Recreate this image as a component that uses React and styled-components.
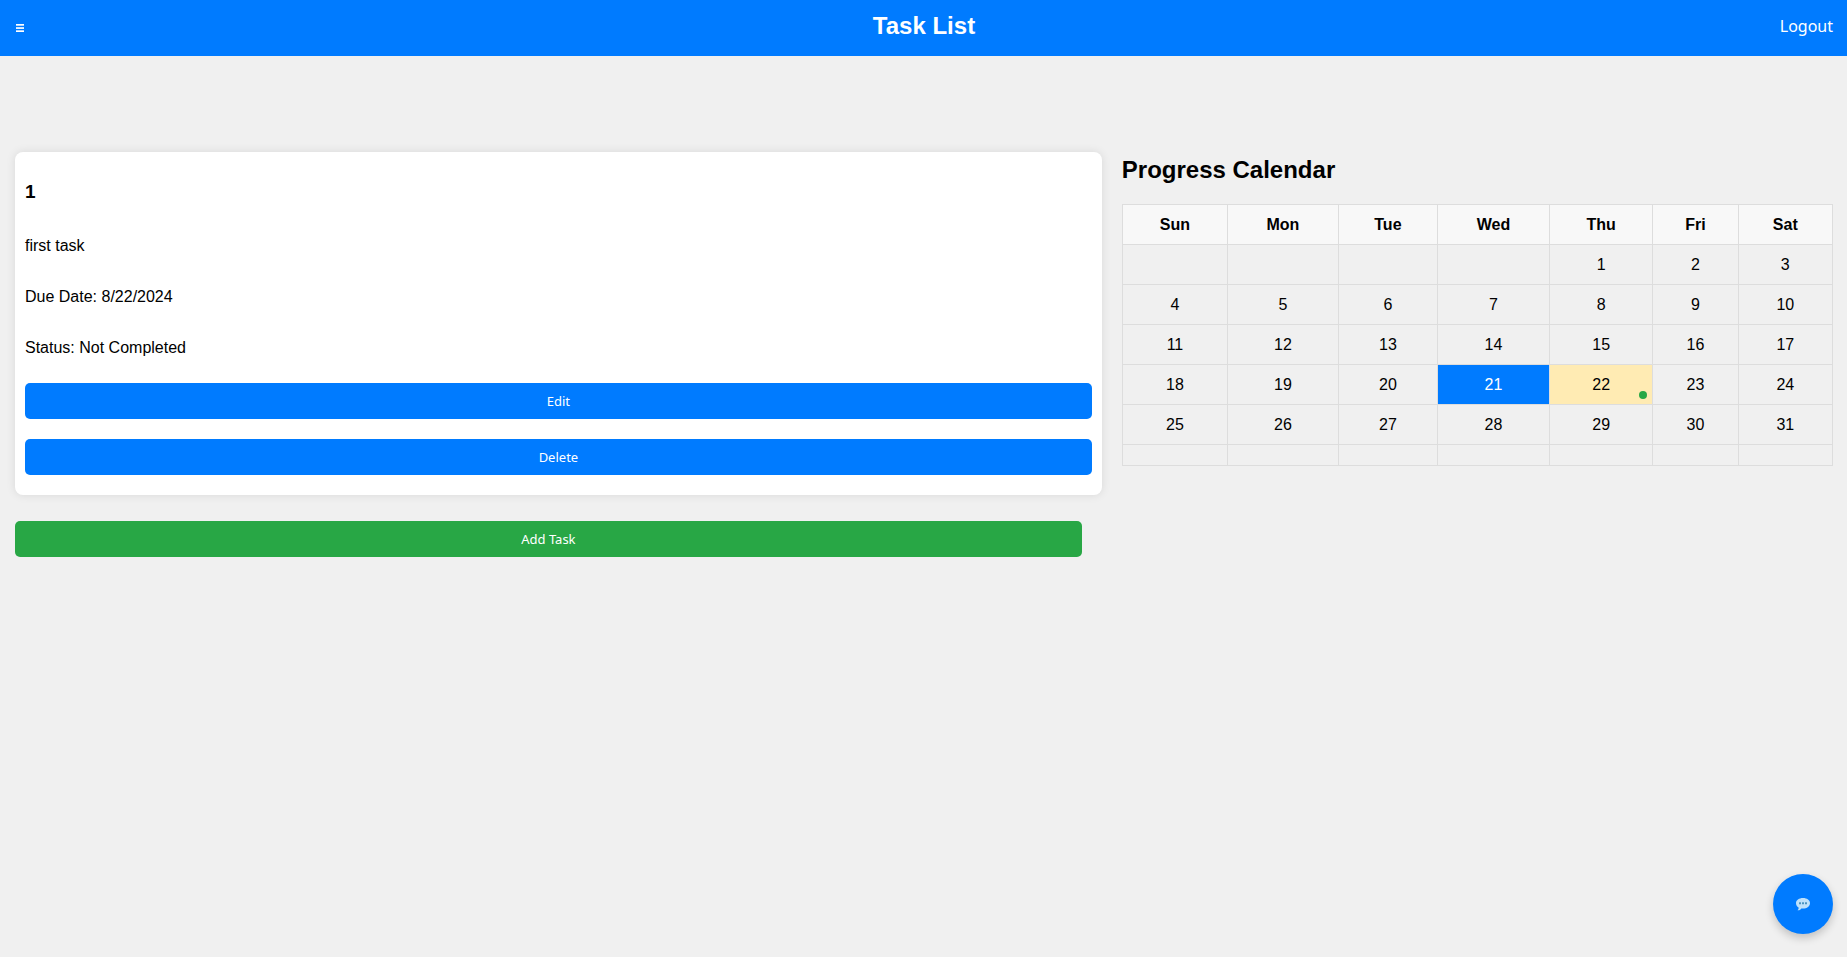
import React from "react";
import styled, { createGlobalStyle, css } from "styled-components";

const GlobalStyle = createGlobalStyle`
  body {
    margin: 0;
    background: #f0f0f0;
    color: #000;
    font-family: "Liberation Sans", Arial, sans-serif;
    font-size: 16px;
    line-height: 19px;
  }
`;

const uiFont = css`
  font-family: "Noto Sans", sans-serif;
`;

const Header = styled.header`
  display: grid;
  grid-template-columns: 1fr auto 1fr;
  align-items: center;
  padding: 12px 14px 16px 15px;
  background: #007bff;
  color: #fff;
`;

const Title = styled.h1`
  margin: 0;
  font-size: 24px;
  line-height: 28px;
`;

const MenuButton = styled.button`
  justify-self: start;
  display: flex;
  margin: 0;
  padding: 4px 0 0;
  border: 0;
  background: none;
  color: inherit;
  cursor: pointer;
`;

const LogoutLink = styled.a`
  ${uiFont}
  justify-self: end;
  color: inherit;
  font-size: 16px;
  text-decoration: none;
`;

const Main = styled.main`
  display: grid;
  grid-template-columns: 3fr 2fr;
  gap: 40px;
  align-items: start;
  padding: 96px 14px 20px 15px;
`;

const TaskCard = styled.article`
  width: 100%;
  padding: 10px;
  margin-bottom: 26px;
  border-radius: 8px;
  background: #fff;
  box-shadow: 0 0 10px rgba(0, 0, 0, 0.1);
  display: flex;
  flex-direction: column;
`;

const TaskTitle = styled.h3`
  margin: 20px 0 18px;
  font-size: 19px;
  line-height: 20px;
`;

const TaskText = styled.p`
  margin: 16px 0;
`;

const Button = styled.button`
  ${uiFont}
  width: 100%;
  height: 36px;
  padding: 0 10px;
  margin: ${(p) => (p.$green ? "0" : "10px 0")};
  border: 0;
  border-radius: 5px;
  background: ${(p) => (p.$green ? "#28a745" : "#007bff")};
  color: #fff;
  font-size: 13px;
  cursor: pointer;
`;

const CalendarTitle = styled.h2`
  margin: 4px 0 20px;
  font-size: 24px;
  line-height: 28px;
`;

const CalendarTable = styled.table`
  width: 100%;
  border-collapse: collapse;
`;

const DayName = styled.th`
  padding: 10px;
  border: 1px solid #ddd;
  background: #f8f8f8;
`;

const dayStates = {
  today: css`
    background: #007bff;
    color: #fff;
  `,
  due: css`
    background: #ffebb3;
  `,
};

const Day = styled.td`
  position: relative;
  padding: 10px;
  border: 1px solid #ddd;
  text-align: center;
  ${(p) => dayStates[p.$state]}
`;

const TaskDot = styled.span`
  position: absolute;
  right: 5px;
  bottom: 5px;
  width: 8px;
  height: 8px;
  border-radius: 50%;
  background: #28a745;
`;

const ChatButton = styled.button`
  position: fixed;
  right: 14px;
  bottom: 23px;
  display: flex;
  align-items: center;
  justify-content: center;
  width: 60px;
  height: 60px;
  padding: 0;
  border: 0;
  border-radius: 50%;
  background: #007bff;
  box-shadow: 0 4px 8px rgba(0, 0, 0, 0.2);
  cursor: pointer;
`;

const MenuIcon = () => (
  <svg width="9" height="8" viewBox="0 0 9 8" fill="#fff" aria-hidden="true">
    <rect x="1" y="0" width="8" height="1.7" />
    <rect x="1" y="3.2" width="8" height="1.7" />
    <rect x="1" y="6.3" width="8" height="1.7" />
  </svg>
);

const ChatIcon = () => (
  <svg width="14" height="13" viewBox="0 0 14 13" aria-hidden="true">
    <path
      d="M7 0C3 0 0 2.2 0 5.2c0 1.900 1 3.400 2.600 4.400.2 1.100-.3 2-1.100 2.700 1.700.2 3-.6 3.800-1.900.5.1 1.100.1 1.700.1 4 0 7-2.300 7-5.300S11 0 7 0z"
      fill="#bfe1fa"
    />
    <g fill="#4a93c0">
      <rect x="3" y="4.300" width="2" height="2" rx="0.300" />
      <rect x="6" y="4.300" width="2" height="2" rx="0.300" />
      <rect x="9" y="4.300" width="2" height="2" rx="0.300" />
    </g>
  </svg>
);

const dayNames = ["Sun", "Mon", "Tue", "Wed", "Thu", "Fri", "Sat"];
const firstWeekday = 4;
const daysInMonth = 31;
const today = 21;
const dueDay = 22;

const weeks = Array.from({ length: 6 }, (_, week) =>
  dayNames.map((_, weekday) => {
    const day = week * 7 + weekday - firstWeekday + 1;
    return day > 0 && day <= daysInMonth ? day : null;
  })
);

const stateOf = (day) =>
  day === today ? "today" : day === dueDay ? "due" : undefined;

const Calendar = () => (
  <section>
    <CalendarTitle>Progress Calendar</CalendarTitle>
    <CalendarTable>
      <thead>
        <tr>
          {dayNames.map((name) => (
            <DayName key={name} scope="col">{name}</DayName>
          ))}
        </tr>
      </thead>
      <tbody>
        {weeks.map((week, i) => (
          <tr key={i}>
            {week.map((day, j) => (
              <Day key={j} $state={stateOf(day)}>
                {day}
                {day === dueDay && <TaskDot />}
              </Day>
            ))}
          </tr>
        ))}
      </tbody>
    </CalendarTable>
  </section>
);

export default function App() {
  return (
    <>
      <GlobalStyle />
      <Header>
        <MenuButton type="button" aria-label="Menu">
          <MenuIcon />
        </MenuButton>
        <Title>Task List</Title>
        <LogoutLink href="#logout">Logout</LogoutLink>
      </Header>
      <Main>
        <section>
          <TaskCard>
            <TaskTitle>1</TaskTitle>
            <TaskText>first task</TaskText>
            <TaskText>Due Date: 8/22/2024</TaskText>
            <TaskText>Status: Not Completed</TaskText>
            <Button type="button">Edit</Button>
            <Button type="button">Delete</Button>
          </TaskCard>
          <Button type="button" $green>Add Task</Button>
        </section>
        <Calendar />
      </Main>
      <ChatButton type="button" aria-label="Open chat">
        <ChatIcon />
      </ChatButton>
    </>
  );
}
